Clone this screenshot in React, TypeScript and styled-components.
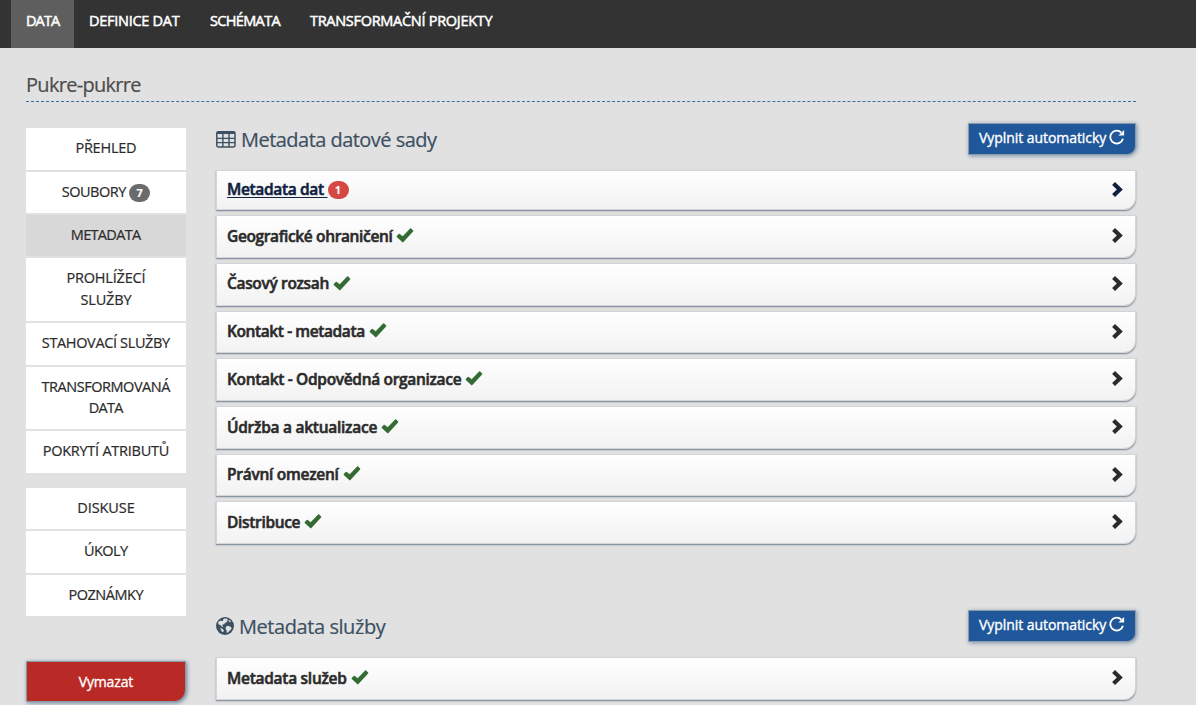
import React from "react";
import styled, { createGlobalStyle } from "styled-components";

const GlobalStyle = createGlobalStyle`
  * { box-sizing: border-box; }
  html, body { margin: 0; height: 100%; overflow: hidden; }
  body {
    background: #e1e1e1;
    color: #2b2b2b;
    font-family: "Open Sans", "Noto Sans", sans-serif;
    font-size: 14.5px;
    line-height: 21.4px;
  }
`;

const Label = styled.span<{ $track: number }>`
  letter-spacing: ${(p) => p.$track}px;
  margin-right: ${(p) => -p.$track}px;
`;

const TopNav = styled.nav`
  display: flex;
  height: 48px;
  padding-left: 11px;
  background: #333;
`;

const TopNavItem = styled.a<{ $active?: boolean; $width: number }>`
  width: ${(p) => p.$width}px;
  padding: 10px 0 0 15px;
  color: #fff;
  white-space: nowrap;
  -webkit-text-stroke: 0.5px #fff;
  background: ${(p) => (p.$active ? "#5e5e5e" : "transparent")};
`;

const Page = styled.div`
  width: 1136px;
  padding: 20px 0 0 26px;
`;

const PageTitle = styled.h1`
  height: 34px;
  margin: 0;
  padding-top: 5px;
  border-bottom: 1px dashed #3c6f9f;
  color: #4d4d4d;
  font-size: 20px;
  font-weight: 400;
  line-height: 24px;
  -webkit-text-stroke: 0.2px currentColor;
`;

const Columns = styled.div`
  display: flex;
  gap: 30px;
`;

const Sidebar = styled.aside`
  width: 160px;
  padding-top: 26.15px;
`;

const MenuGroup = styled.div`
  display: flex;
  flex-direction: column;
  gap: 2px;
  margin-bottom: 15px;
`;

const MenuItem = styled.a<{ $active?: boolean }>`
  padding: 9px 15px 11px;
  background: ${(p) => (p.$active ? "#d8d8d8" : "#fff")};
  text-align: center;
  -webkit-text-stroke: 0.2px currentColor;
`;

const Badge = styled.span<{ $color: string }>`
  display: inline-block;
  min-width: 21px;
  height: 18px;
  border-radius: 9px;
  background: ${(p) => p.$color};
  color: #fff;
  font-size: 11px;
  font-weight: 700;
  line-height: 18px;
  text-align: center;
`;

const MenuBadge = styled(Badge)`
  margin: -4px 0 -4px 3px;
  vertical-align: middle;
`;

const DeleteButton = styled.button`
  display: block;
  width: 160px;
  height: 41px;
  margin-top: 45px;
  padding: 0;
  border: 1px solid #8a98a4;
  border-radius: 0 0 12px 0;
  background: #b92a26;
  box-shadow: 1px 1px 4px rgba(50, 90, 130, 0.7);
  color: #fff;
  font: 400 14px/20px "Open Sans", sans-serif;
  -webkit-text-stroke: 0.35px #fff;
`;

const Content = styled.main`
  width: 920px;
  padding-top: 21px;
`;

const Section = styled.section<{ $height?: number }>`
  height: ${(p) => (p.$height ? `${p.$height}px` : "auto")};
`;

const SectionHeader = styled.header`
  display: flex;
  align-items: flex-start;
  justify-content: space-between;
  height: 47px;
`;

const SectionTitle = styled.h2`
  display: flex;
  align-items: center;
  gap: 5px;
  height: 33px;
  margin: 0;
  color: #3c5062;
  font-size: 20px;
  font-weight: 400;
  -webkit-text-stroke: 0.2px currentColor;

  svg { margin-top: -1px; }
`;

const FillButton = styled.button`
  display: flex;
  align-items: center;
  gap: 3px;
  width: 168px;
  height: 32px;
  padding: 0 0 2px 10px;
  border: 1px solid #8a9ca8;
  border-radius: 0 0 9px 0;
  background: #20579a;
  box-shadow: 1px 1px 4px rgba(50, 90, 130, 0.6);
  color: #fff;
  font: 400 14px/20px "Open Sans", sans-serif;
  white-space: nowrap;
  -webkit-text-stroke: 0.35px #fff;

  svg { flex: none; margin-bottom: 2px; }
`;

const PanelList = styled.div`
  display: flex;
  flex-direction: column;
  gap: 5px;
`;

const Panel = styled.a<{ $current?: boolean }>`
  display: flex;
  align-items: center;
  flex: none;
  height: ${(p) => (p.$current ? 40.2 : 42.68)}px;
  padding: 0 12px 0 10px;
  border: 1px solid #d3d6d9;
  border-radius: 0 0 12px 0;
  background: linear-gradient(#fff, #f2f2f2);
  background-clip: padding-box;
  box-shadow: 0 1px 1px #8492a0, 0 1px 2px rgba(70, 85, 100, 0.35);
  color: ${(p) => (p.$current ? "#10223f" : "#2b2b2b")};
  font-size: 15.5px;
  font-weight: 600;
`;

const PanelLabel = styled.span<{ $track: number; $current?: boolean }>`
  letter-spacing: ${(p) => p.$track}px;
  white-space: pre;
  -webkit-text-stroke: 0.55px currentColor;
  text-decoration: ${(p) => (p.$current ? "underline" : "none")};
  text-decoration-thickness: 1px;
  text-underline-offset: 2px;
`;

const PanelMark = styled.span`
  display: flex;
  flex: 1;
  margin: 0 auto 2px 4px;
`;

const PanelBadge = styled(Badge)`
  margin-right: auto;
`;

const Chevron = styled.svg`
  flex: none;
  margin-bottom: 1.5px;
  fill: currentColor;
`;

const CheckIcon = () => (
  <svg width="18" height="15" viewBox="0 0 18 15" fill="#336b33">
    <path d="M14.1.5q.6-.5 1.1 0l1.9 1.9q.5.5 0 1L7.4 14.1q-.6.6-1.2 0L.8 8.9q-.5-.5 0-1l1.9-1.9q.5-.5 1.1 0l2.9 2.3z" />
  </svg>
);

const ChevronIcon = () => (
  <Chevron width="11" height="15" viewBox="0 0 11 15">
    <path d="M3 .1 10.8 7.5 3 14.9.1 12.1 4.8 7.5.1 2.9z" />
  </Chevron>
);

const RepeatIcon = () => (
  <svg width="16" height="16" viewBox="0 0 16 16">
    <path d="M13.9 9.7A6.4 6.4 0 1 1 12.2 3.5" fill="none" stroke="#fff" strokeWidth="1.8" />
    <path d="M15.1.9v5.6H9.4z" fill="#fff" />
  </svg>
);

const TableIcon = () => (
  <svg width="20" height="17" viewBox="0 0 20 17" fill="none" stroke="#3c5062">
    <rect x=".8" y=".8" width="18.2" height="15.2" rx="1.4" strokeWidth="1.5" />
    <path d="M1 2h18" strokeWidth="2" />
    <path d="M1 7.4h18M1 11.6h18M6.9 2v14M13 2v14" strokeWidth="1.4" />
  </svg>
);

const GlobeIcon = () => (
  <svg width="18" height="18" viewBox="0 0 18 18">
    <circle cx="9" cy="9" r="9" fill="#3c5062" />
    <path
      fill="#e1e1e1"
      d="M8.2 1.6l2.9.2 1.1 1.3-1.5.6.5 1.2-2 .9-1.1 1.5-1.4.2-.5 1 1.2 1.3-1.2.2-1.5-1.7-1.9-.7L2 6l.9-1.6 1.3-1 1 .7 1.5-.2.4-1.1z M12.2 3.6l1.3-.7 1.5 1.6-1.1.7z M10.1 9.6l2-.9 1.9.8 1.7 1.3-.7 1.7-1.6 1.5-1.7 1.8-1.2-.4.2-2-1.2-1.6z M4 10.8l2.6 1.2 1.3 1.5-.8 1.8-1.4-.7-.6-1.6z"
    />
  </svg>
);

const topNav = [
  { text: "DATA", track: -0.9, width: 63, active: true },
  { text: "DEFINICE DAT", track: -0.27, width: 121 },
  { text: "SCHÉMATA", track: -0.65, width: 100 },
  { text: "TRANSFORMAČNÍ PROJEKTY", track: -0.29, width: 213 },
];

type Word = [string, number];

const dataMenu: { words: Word[]; badge?: string; active?: boolean }[] = [
  { words: [["PŘEHLED", -0.225]] },
  { words: [["SOUBORY", -0.502]], badge: "7" },
  { words: [["METADATA", -0.68]], active: true },
  { words: [["PROHLÍŽECÍ", -0.181], ["SLUŽBY", -0.146]] },
  { words: [["STAHOVACÍ SLUŽBY", -0.36]] },
  { words: [["TRANSFORMOVANÁ", -0.47], ["DATA", -0.715]] },
  { words: [["POKRYTÍ ATRIBUTŮ", -0.25]] },
];

const teamMenu: { words: Word[] }[] = [
  { words: [["DISKUSE", -0.069]] },
  { words: [["ÚKOLY", -0.581]] },
  { words: [["POZNÁMKY", -0.48]] },
];

const datasetPanels: Word[] = [
  ["Geografické ohraničení", -0.36],
  ["Časový rozsah", -0.34],
  ["Kontakt - metadata", -0.4],
  ["Kontakt - Odpovědná organizace", -0.325],
  ["Údržba a aktualizace", -0.27],
  ["Právní omezení", -0.27],
  ["Distribuce", -0.33],
];

const MenuWords = ({ words }: { words: Word[] }) => (
  <>
    {words.map(([text, track], i) => (
      <React.Fragment key={text}>
        {i > 0 && <br />}
        <Label $track={track}>{text}</Label>
      </React.Fragment>
    ))}
  </>
);

const DonePanel = ({ text, track }: { text: string; track: number }) => (
  <Panel>
    <PanelLabel $track={track}>{text}</PanelLabel>
    <PanelMark>
      <CheckIcon />
    </PanelMark>
    <ChevronIcon />
  </Panel>
);

const AutoFill = () => (
  <FillButton>
    <Label $track={-0.06}>Vyplnit automaticky</Label>
    <RepeatIcon />
  </FillButton>
);

export default function App() {
  return (
    <>
      <GlobalStyle />
      <TopNav>
        {topNav.map((item) => (
          <TopNavItem key={item.text} $width={item.width} $active={item.active}>
            <Label $track={item.track}>{item.text}</Label>
          </TopNavItem>
        ))}
      </TopNav>
      <Page>
        <PageTitle>
          <Label $track={-0.7}>Pukre-pukrre</Label>
        </PageTitle>
        <Columns>
          <Sidebar>
            <MenuGroup>
              {dataMenu.map((item) => (
                <MenuItem key={item.words[0][0]} $active={item.active}>
                  <MenuWords words={item.words} />
                  {item.badge && <MenuBadge $color="#6b6b6b">{item.badge}</MenuBadge>}
                </MenuItem>
              ))}
            </MenuGroup>
            <MenuGroup>
              {teamMenu.map((item) => (
                <MenuItem key={item.words[0][0]}>
                  <MenuWords words={item.words} />
                </MenuItem>
              ))}
            </MenuGroup>
            <DeleteButton>
              <Label $track={-0.134}>Vymazat</Label>
            </DeleteButton>
          </Sidebar>
          <Content>
            <Section $height={487}>
              <SectionHeader>
                <SectionTitle>
                  <TableIcon />
                  <Label $track={-0.53}>Metadata datové sady</Label>
                </SectionTitle>
                <AutoFill />
              </SectionHeader>
              <PanelList>
                <Panel $current>
                  <PanelLabel $track={-0.34} $current>
                    {"Metadata dat "}
                  </PanelLabel>
                  <PanelBadge $color="#d64844">1</PanelBadge>
                  <ChevronIcon />
                </Panel>
                {datasetPanels.map(([text, track]) => (
                  <DonePanel key={text} text={text} track={track} />
                ))}
              </PanelList>
            </Section>
            <Section>
              <SectionHeader>
                <SectionTitle>
                  <GlobeIcon />
                  <Label $track={-0.43}>Metadata služby</Label>
                </SectionTitle>
                <AutoFill />
              </SectionHeader>
              <PanelList>
                <DonePanel text="Metadata služeb" track={-0.28} />
              </PanelList>
            </Section>
          </Content>
        </Columns>
      </Page>
    </>
  );
}
